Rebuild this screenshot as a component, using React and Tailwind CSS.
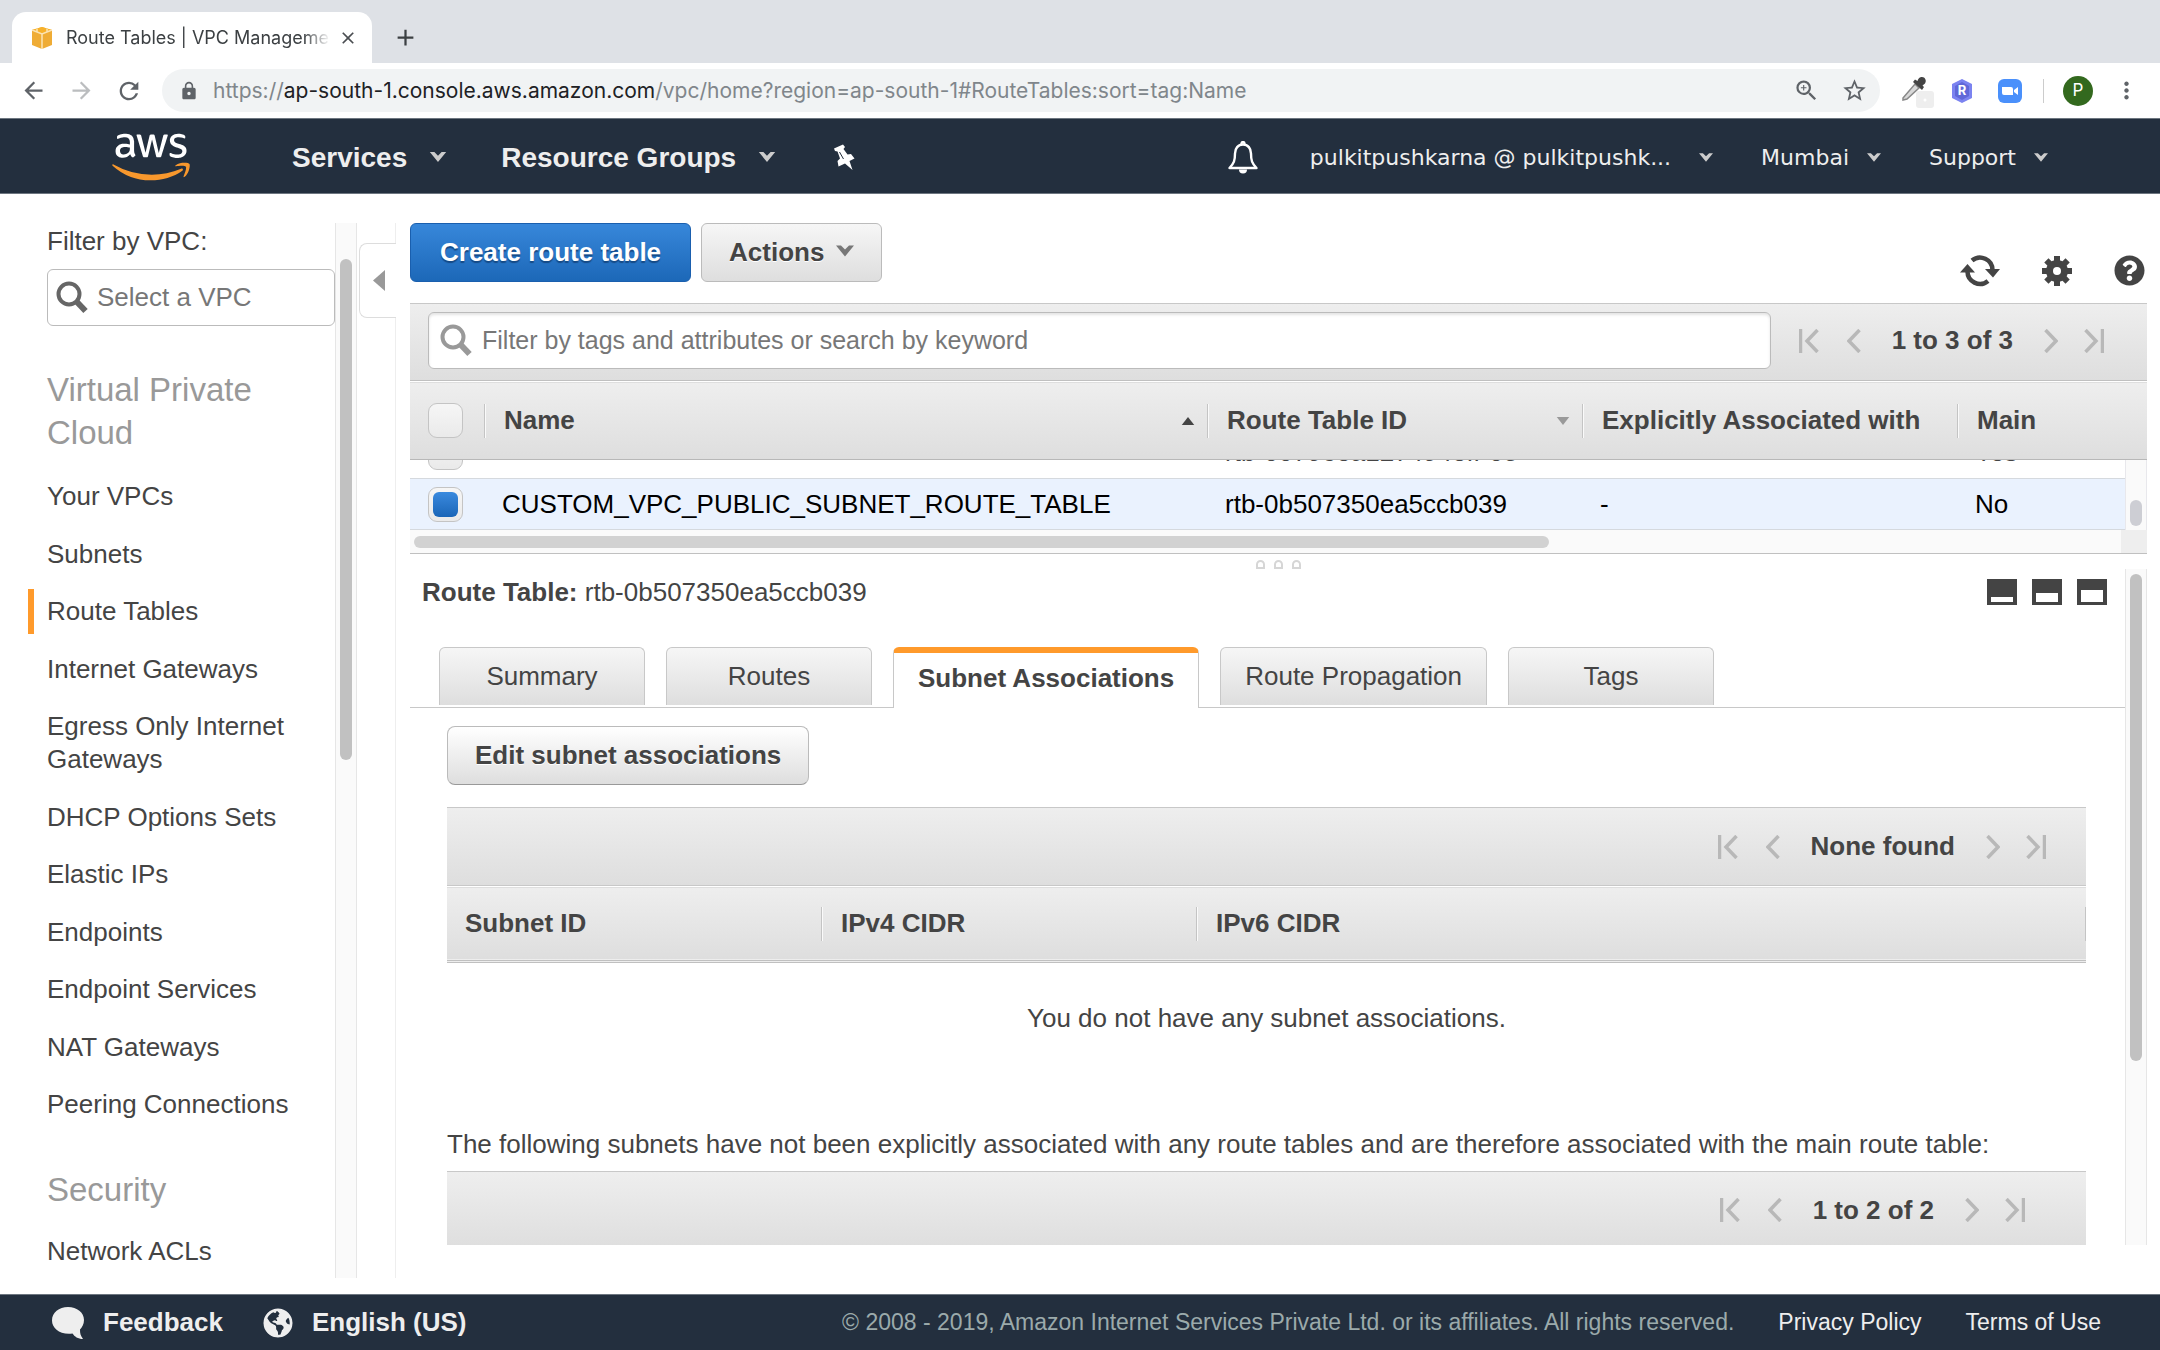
import { useState } from 'react';
import { MdAdd, MdArrowBack, MdArrowForward, MdClose, MdLock, MdMoreVert, MdRefresh, MdStarBorder, MdZoomIn } from 'react-icons/md';
import { FaAws, FaGlobeAmericas, FaQuestionCircle } from 'react-icons/fa';

const vpcLinks = [
  'Your VPCs',
  'Subnets',
  'Route Tables',
  'Internet Gateways',
  'Egress Only Internet Gateways',
  'DHCP Options Sets',
  'Elastic IPs',
  'Endpoints',
  'Endpoint Services',
  'NAT Gateways',
  'Peering Connections',
];

const tabs = ['Summary', 'Routes', 'Subnet Associations', 'Route Propagation', 'Tags'];

const routeTables = [
  { id: 'rtb-00796ea127494eff-08', name: '', associated: '', main: 'Yes' },
  { id: 'rtb-0b507350ea5ccb039', name: 'CUSTOM_VPC_PUBLIC_SUBNET_ROUTE_TABLE', associated: '-', main: 'No' },
];

function Caret({ className }) {
  return (
    <svg viewBox="0 0 18 11" className={className} fill="currentColor">
      <path d="M0 0h5l4 4 4-4h5L9 11z" />
    </svg>
  );
}

function SearchIcon({ className }) {
  return (
    <svg viewBox="0 0 32 33" className={className} fill="none" stroke="currentColor">
      <circle cx="13" cy="13" r="10.5" strokeWidth="4" />
      <path d="M21 21l8.500 9" strokeWidth="6" />
    </svg>
  );
}

function PinIcon() {
  return (
    <svg viewBox="0 0 22 26" className="h-[26px] w-[22px]" fill="#fff">
      <path d="M1 4.500L10 .5l2 2.500-1.500 2 4 5.500 3.500-.5 3.500 4.500-5 2.500L19.500 26 12 19.500 5.500 22.500 4.500 17l2.500-2.500-2.500-7-2.500-.5z" />
      <path d="M6.500 8l4 7" stroke="#232f3e" strokeWidth="1" />
    </svg>
  );
}

function BellIcon() {
  return (
    <svg viewBox="0 0 30 33" className="h-[33px] w-[30px]" fill="none" stroke="#fff" strokeWidth="2.400">
      <path d="M15 3.500c-5 0-8 4-8 9 0 7-1 10-5.500 14.500h27C24 22.500 23 19.500 23 12.500c0-5-3-9-8-9z" strokeLinejoin="round" />
      <path d="M13.500 3a1.500 2 0 013 0" />
      <path d="M11 28.500h8a4 4 0 01-8 0z" fill="#fff" stroke="none" />
    </svg>
  );
}

function RefreshIcon() {
  return (
    <svg viewBox="0 0 40 33" className="h-[33px] w-10" fill="none" stroke="#444" strokeWidth="4.500">
      <path d="M12 6.500A12.500 12.500 0 0132.500 16" />
      <path d="M28 27A12.500 12.500 0 017.500 17" />
      <path d="M25 15h15l-7 8.500z" fill="#444" stroke="none" />
      <path d="M0 18.500h15L7.500 10z" fill="#444" stroke="none" />
    </svg>
  );
}

function GearIcon() {
  return (
    <svg viewBox="0 0 30 30" className="size-[30px]">
      <g fill="#444">
        <circle cx="15" cy="15" r="11" />
        <rect x="12" y="0" width="6" height="30" />
        <rect x="12" y="0" width="6" height="30" transform="rotate(45 15 15)" />
        <rect x="12" y="0" width="6" height="30" transform="rotate(90 15 15)" />
        <rect x="12" y="0" width="6" height="30" transform="rotate(135 15 15)" />
      </g>
      <circle cx="15" cy="15" r="4" fill="#fff" />
    </svg>
  );
}

function PaneIcon({ top }) {
  return (
    <svg viewBox="0 0 30 26" className="h-[26px] w-[30px]">
      <path d="M0 0h30v26H0z" fill="#444" />
      <path d={`M4 ${top}h22v${23 - top}H4z`} fill="#fff" />
    </svg>
  );
}

function PagerIcon({ end, flip }) {
  return (
    <svg viewBox={end ? '0 0 20 24' : '0 0 14 24'} className={`h-6 ${end ? 'w-5' : 'w-3.5'} ${flip ? '-scale-x-100' : ''}`} fill="none" stroke="#b8b8b8" strokeWidth="3.500">
      {end && <path d="M1.500 0v24" />}
      <path d={end ? 'M18.500 1L8 12l10.500 11' : 'M12.500 1L2 12l10.500 11'} />
    </svg>
  );
}

function Pager({ label }) {
  return (
    <div className="flex items-center">
      <button aria-label="First page"><PagerIcon end /></button>
      <button aria-label="Previous page" className="ml-7"><PagerIcon /></button>
      <span className="mx-[31px] font-bold whitespace-nowrap">{label}</span>
      <button aria-label="Next page"><PagerIcon flip /></button>
      <button aria-label="Last page" className="ml-[26px]"><PagerIcon end flip /></button>
    </div>
  );
}

function Checkbox(props) {
  return (
    <input
      type="checkbox"
      className="block size-[35px] appearance-none rounded-[9px] border border-[#c4c4c4] bg-linear-to-b from-[#f6f6f6] to-[#eaeaea] p-[4px] before:block before:size-full before:rounded-[6px] before:content-[''] checked:before:bg-linear-to-b checked:before:from-[#3a8ade] checked:before:to-[#1a66b8]"
      {...props}
    />
  );
}

function Columns() {
  return (
    <colgroup>
      <col className="w-[74px]" />
      <col className="w-[723px]" />
      <col className="w-[375px]" />
      <col className="w-[375px]" />
      <col />
    </colgroup>
  );
}

function HeadCell({ children }) {
  return (
    <div className="flex h-[34px] items-center justify-between border-l border-[#c4c4c4] pr-3 pl-[19px] whitespace-nowrap shadow-[inset_1px_0_0_#fafafa]">
      {children}
    </div>
  );
}

function BrowserBar() {
  return (
    <div className="shrink-0 font-[Inter,sans-serif]">
      <div className="flex h-[63px] items-end bg-[#dee1e6] pl-3">
        <div className="flex h-[51px] w-[360px] items-center rounded-t-[14px] bg-white pr-3.5 pl-[19px]">
          <svg viewBox="0 0 22 22" className="size-[22px] shrink-0">
            <path d="M11 0l10 3v15l-10 4L1 18V3z" fill="#efac35" />
            <path d="M11 0l10 3-10 4L1 3z" fill="#f7b12a" />
            <path d="M1 3l10 4 10-4M11 7v15M6 1.500v3.500M16 1.500v3.500" stroke="#fbe3b3" strokeWidth="1.500" fill="none" />
          </svg>
          <span className="ml-[13px] flex-1 overflow-hidden mask-r-from-90% text-[18px] whitespace-nowrap text-[#3c4043]">Route Tables | VPC Management</span>
          <button aria-label="Close tab" className="ml-2"><MdClose className="size-5 text-[#4a4d51]" /></button>
        </div>
        <button aria-label="New tab" className="mb-3 ml-5"><MdAdd className="size-[27px] text-[#3c4043]" /></button>
      </div>
      <div className="flex h-[55px] items-center bg-white px-5">
        <button aria-label="Back"><MdArrowBack className="size-[27px] text-[#5f6368]" /></button>
        <button aria-label="Forward" className="ml-[21px]"><MdArrowForward className="size-[27px] text-[#bbbdbf]" /></button>
        <button aria-label="Reload" className="ml-5"><MdRefresh className="size-[28px] text-[#5f6368]" /></button>
        <div className="ml-[19px] flex h-[43px] flex-1 items-center rounded-full bg-[#f1f3f4] pr-3 pl-[17px] text-[#5f6368]">
          <MdLock className="size-5" />
          <div role="textbox" aria-label="Address" contentEditable suppressContentEditableWarning className="ml-[14px] flex-1 text-[21px] whitespace-nowrap text-[#80868b] outline-none">
            https://<span className="text-[#202124]">ap-south-1.console.aws.amazon.com</span>/vpc/home?region=ap-south-1#RouteTables:sort=tag:Name
          </div>
          <button aria-label="Zoom"><MdZoomIn className="size-[27px]" /></button>
          <button aria-label="Bookmark" className="ml-[21px]"><MdStarBorder className="size-[27px]" /></button>
        </div>
        <button aria-label="Color picker" className="ml-5">
          <svg viewBox="0 0 34 34" className="size-[34px]">
            <rect x="16" y="17" width="18" height="17" rx="3" fill="#eee" />
            <circle cx="25" cy="26" r="1.500" fill="#fff" />
            <path d="M3 24L15 10l4 4L7 25l-4 1z" fill="#d8d8d8" stroke="#888" strokeWidth="1.500" />
            <path d="M13 8l9 8 2-3-1.500-1.500 2.500-2c2-3 0-6.500-3-6.500s-4 2.500-4.500 4L15 5.500z" fill="#444" />
          </svg>
        </button>
        <button className="relative ml-4 flex size-6 items-center justify-center text-[13px] font-bold text-white">
          <svg viewBox="0 0 24 24" className="absolute inset-0 size-6">
            <path d="M12 0l10 5v14l-10 5L2 19V5z" fill="#7b83f0" />
            <path d="M12 3l7 4v10l-7 4-7-4V7z" fill="#6068d8" />
          </svg>
          <span className="relative">R</span>
        </button>
        <button aria-label="Zoom scheduler" className="ml-6">
          <svg viewBox="0 0 24 24" className="size-6">
            <rect width="24" height="24" rx="6" fill="#4a90fb" />
            <path d="M4 8h9a2 2 0 012 2v6H6a2 2 0 01-2-2zM16 11l4-3v8l-4-3z" fill="#fff" />
          </svg>
        </button>
        <div className="ml-[21px] h-6 w-px bg-[#ccc]" />
        <button className="ml-[19px] flex size-[30px] items-center justify-center rounded-full bg-[#33691e] text-[17px] text-white">P</button>
        <button aria-label="Menu" className="ml-5"><MdMoreVert className="size-[27px] text-[#5f6368]" /></button>
      </div>
    </div>
  );
}

function ConsoleNav() {
  return (
    <nav className="flex h-[76px] shrink-0 items-center border-y border-[#6d7680] bg-[#232f3e] px-28 pt-0.5 text-[#eee] [text-shadow:0_2px_1px_#000]">
      <a href="#" aria-label="AWS">
        <svg className="absolute size-0">
          <linearGradient id="awsFill" x2="0" y2="1">
            <stop offset="58%" stopColor="#fff" />
            <stop offset="58%" stopColor="#f8982d" />
          </linearGradient>
        </svg>
        <FaAws className="h-[62px] w-[78px]" style={{ fill: 'url(#awsFill)' }} />
      </a>
      <button className="ml-[102px] flex items-center gap-[22px] text-[28px] font-bold">
        Services <Caret className="h-[10px] w-[18px] text-[#ccc]" />
      </button>
      <button className="ml-[54px] flex items-center gap-[22px] text-[28px] font-bold">
        Resource Groups <Caret className="h-[10px] w-[18px] text-[#ccc]" />
      </button>
      <button aria-label="Pin" className="ml-[57px]"><PinIcon /></button>
      <button aria-label="Notifications" className="ml-auto"><BellIcon /></button>
      <div className="ml-[52px] flex items-center gap-12 font-['DejaVu_Sans',Verdana,sans-serif] text-[22px]">
        <button className="flex items-center gap-7">pulkitpushkarna @ pulkitpushk... <Caret className="h-[9px] w-3.5 text-[#ccc]" /></button>
        <button className="flex items-center gap-[18px]">Mumbai <Caret className="h-[9px] w-3.5 text-[#ccc]" /></button>
        <button className="flex items-center gap-[18px]">Support <Caret className="h-[9px] w-3.5 text-[#ccc]" /></button>
      </div>
    </nav>
  );
}

function Sidebar() {
  return (
    <aside className="flex w-[396px] shrink-0 pb-4">
      <div className="w-[335px] overflow-hidden pl-[47px]">
        <label htmlFor="vpc" className="block leading-9">Filter by VPC:</label>
        <div className="mt-[10px] flex h-[57px] items-center rounded-md border border-[#bbb] bg-white pl-2">
          <SearchIcon className="h-[33px] w-8 shrink-0 text-[#666]" />
          <input id="vpc" placeholder="Select a VPC" className="ml-[9px] w-full min-w-0 outline-none placeholder:text-[#777]" />
        </div>
        <h2 className="mt-[42px] text-[33px] leading-[43px] text-[#999]">Virtual Private Cloud</h2>
        <ul className="mt-[26px] flex h-[641px] flex-col justify-between">
          {vpcLinks.map(link => (
            <li key={link}>
              {link === 'Route Tables' ? (
                <a href="#" aria-current="page" className="-ml-[19px] flex items-center gap-[13px]">
                  <span className="-my-1.5 h-[45px] w-1.5 bg-[#ff9a2b]" />
                  {link}
                </a>
              ) : (
                <a href="#" className="block">{link}</a>
              )}
            </li>
          ))}
        </ul>
        <h2 className="mt-[47px] text-[33px] leading-[43px] text-[#999]">Security</h2>
        <a href="#" className="mt-6 block">Network ACLs</a>
      </div>
      <div className="w-[22px] border-x border-[#e6e6e6] bg-[#fafafa] px-1 pt-9">
        <div className="h-[501px] rounded-full bg-[#c1c1c1]" />
      </div>
      <div className="flex flex-1 flex-col pl-0.5">
        <div className="h-5 border-r border-[#eee]" />
        <button aria-label="Collapse navigation" className="flex h-[75px] items-center justify-end rounded-l-lg border-y border-l border-[#ddd] pr-[11px]">
          <svg viewBox="0 0 12 21" className="h-[21px] w-3"><path d="M12 0v21L0 10.500z" fill="#999" /></svg>
        </button>
        <div className="flex-1 border-r border-[#eee]" />
      </div>
    </aside>
  );
}

function RouteTableList() {
  return (
    <>
      <div className="flex h-[78px] shrink-0 border-t border-b border-t-[#c8c8c8] border-b-[#c0c0c0] bg-linear-to-b from-[#eee] to-[#dedede] pt-2 pr-[43px] pl-[18px]">
        <label className="mr-7 flex h-[57px] flex-1 items-center rounded-md border border-[#bbb] bg-white pl-[11px] shadow-[inset_0_2px_3px_#e4e4e4]">
          <SearchIcon className="h-[33px] w-8 text-[#999]" />
          <input aria-label="Filter" placeholder="Filter by tags and attributes or search by keyword" className="ml-[10px] flex-1 text-[25px] outline-none placeholder:text-[#777]" />
        </label>
        <div className="flex h-[57px] items-center">
          <Pager label="1 to 3 of 3" />
        </div>
      </div>
      <table className="w-full table-fixed text-left">
        <Columns />
        <thead>
          <tr className="h-[78px] border-t border-b border-t-white border-b-[#b8b8b8] bg-linear-to-b from-[#eee] to-[#dedede]">
            <th className="pl-[18px]"><Checkbox aria-label="Select all" /></th>
            <th>
              <HeadCell>
                Name
                <svg viewBox="0 0 14 9" className="h-2 w-3.5"><path d="M7 0l7 9H0z" fill="#444" /></svg>
              </HeadCell>
            </th>
            <th>
              <HeadCell>
                Route Table ID
                <svg viewBox="0 0 14 9" className="h-2 w-3.5"><path d="M7 9l7-9H0z" fill="#999" /></svg>
              </HeadCell>
            </th>
            <th><HeadCell>Explicitly Associated with</HeadCell></th>
            <th><HeadCell>Main</HeadCell></th>
          </tr>
        </thead>
      </table>
      <div className="flex h-[70px] shrink-0">
        {/* list is scrolled to its end, so the row before the last is cut off */}
        <div className="flex flex-1 flex-col justify-end overflow-hidden">
          <table className="w-full table-fixed">
            <Columns />
            <tbody>
              {routeTables.map(table => (
                <tr key={table.id} className={`h-[51px] border-b border-[#d5d9de] ${table.name ? 'bg-[#eaf2fe] text-black' : ''}`}>
                  <td className="pl-[18px]"><Checkbox aria-label={table.id} defaultChecked={!!table.name} /></td>
                  <td className="pl-[18px]">{table.name}</td>
                  <td className="pl-[18px]">{table.id}</td>
                  <td className="pl-[18px]">{table.associated}</td>
                  <td className="pl-[18px]">{table.main}</td>
                </tr>
              ))}
            </tbody>
          </table>
        </div>
        <div className="flex w-[22px] flex-col justify-end border-x border-[#e8e8ec] bg-[#fafafa] px-1 pb-1">
          <div className="h-[26px] rounded-full bg-[#cdced4]" />
        </div>
      </div>
      <div className="flex h-6 shrink-0 border-b border-[#c0c0c0] bg-[#fafafa]">
        <div className="flex flex-1 items-center px-1">
          <div className="h-3 w-2/3 rounded-full bg-[#d2d2d2]" />
        </div>
        <div className="w-[26px] bg-[#eee]" />
      </div>
      <div className="flex h-[15px] shrink-0 items-end justify-center gap-[9px]">
        <span className="size-[9px] rounded-t-full border-2 border-[#d6d6d6]" />
        <span className="size-[9px] rounded-t-full border-2 border-[#d6d6d6]" />
        <span className="size-[9px] rounded-t-full border-2 border-[#d6d6d6]" />
      </div>
    </>
  );
}

function RouteTableDetail() {
  const [activeTab, setActiveTab] = useState('Subnet Associations');

  return (
    <div className="flex min-h-0 flex-1">
      <div className="flex flex-1 flex-col overflow-hidden">
        <div className="flex h-[46px] shrink-0 items-center pr-[18px] pl-3">
          <h1><b>Route Table:</b> rtb-0b507350ea5ccb039</h1>
          <div className="ml-auto flex gap-[15px]">
            <button aria-label="Minimize pane"><PaneIcon top={18} /></button>
            <button aria-label="Split pane"><PaneIcon top={14} /></button>
            <button aria-label="Maximize pane"><PaneIcon top={11} /></button>
          </div>
        </div>
        <div role="tablist" className="mt-8 flex h-[61px] shrink-0 items-start gap-[21px] border-b border-[#c8c8c8] pl-[29px]">
          {tabs.map(tab => (
            <button
              key={tab}
              role="tab"
              aria-selected={tab === activeTab}
              onClick={() => setActiveTab(tab)}
              className={tab === activeTab
                ? 'h-[61px] min-w-[206px] rounded-t-md border-x border-t-[6px] border-x-[#c8c8c8] border-t-[#ff9a2b] bg-white px-6 pb-1 font-bold'
                : 'h-[58px] min-w-[206px] rounded-t-md border-x border-t border-[#c8c8c8] bg-linear-to-b from-[#f6f6f6] to-[#dedede] px-6'}
            >
              {tab}
            </button>
          ))}
        </div>
        <div className="flex flex-col pt-[18px] pr-[39px] pl-[37px]">
          <button className="h-[59px] shrink-0 self-start rounded-lg border border-[#bbb] border-b-[#999] bg-linear-to-b from-white to-[#dedede] px-[27px] font-bold [text-shadow:0_1px_0_#fff]">
            Edit subnet associations
          </button>
          <div className="mt-[22px] flex h-[79px] shrink-0 justify-end border-y border-[#c8c8c8] bg-linear-to-b from-[#eee] to-[#dedede] pr-10">
            <Pager label="None found" />
          </div>
          <table className="w-full table-fixed">
            <colgroup>
              <col className="w-[374px]" />
              <col className="w-[375px]" />
              <col />
            </colgroup>
            <thead>
              <tr className="h-[75px] border-t border-b-[3px] border-double border-t-white border-b-[#c0c0c0] bg-linear-to-b from-[#eee] to-[#dedede] text-left">
                <th className="pl-[18px]">Subnet ID</th>
                <th><HeadCell>IPv4 CIDR</HeadCell></th>
                <th><div className="border-r border-[#c4c4c4]"><HeadCell>IPv6 CIDR</HeadCell></div></th>
              </tr>
            </thead>
            <tbody>
              <tr>
                <td colSpan={3} className="h-28 text-center">You do not have any subnet associations.</td>
              </tr>
            </tbody>
          </table>
          <p className="mt-[54px] whitespace-nowrap">The following subnets have not been explicitly associated with any route tables and are therefore associated with the main route table:</p>
          <div className="mt-[10px] flex h-[79px] shrink-0 justify-end border-y border-[#c8c8c8] bg-linear-to-b from-[#eee] to-[#dedede] pr-[61px]">
            <Pager label="1 to 2 of 2" />
          </div>
        </div>
      </div>
      <div className="w-[22px] border-x border-[#e6e6e6] bg-[#fafafa] px-1 pt-[5px]">
        <div className="h-[487px] rounded-full bg-[#c1c1c1]" />
      </div>
    </div>
  );
}

export default function App() {
  return (
    <div className="flex h-screen flex-col overflow-hidden bg-white font-['Liberation_Sans',Arial,sans-serif] text-[26px] leading-[33px] text-[#444]">
      <BrowserBar />
      <ConsoleNav />
      <div className="flex min-h-0 flex-1 pt-[29px]">
        <Sidebar />
        <main className="ml-3.5 flex min-w-0 flex-1 flex-col pr-[13px] pb-[49px]">
          <div className="flex h-20 shrink-0 items-start gap-[10px]">
            <button className="h-[59px] rounded-md border border-[#1a5fae] bg-linear-to-b from-[#3787da] to-[#1c68b8] px-[29px] font-bold text-white [text-shadow:0_2px_1px_#154a86]">Create route table</button>
            <button className="flex h-[59px] items-center gap-3 rounded-md border border-[#bbb] bg-linear-to-b from-[#f6f6f6] to-[#dedede] px-[27px] font-bold [text-shadow:0_1px_0_#fff]">
              Actions <Caret className="mb-1 h-3 w-[18px] text-[#777]" />
            </button>
            <div className="ml-auto flex items-center gap-[42px] pt-[31px] pr-0.5">
              <button aria-label="Refresh"><RefreshIcon /></button>
              <button aria-label="Settings"><GearIcon /></button>
              <button aria-label="Help"><FaQuestionCircle className="size-[31px]" /></button>
            </div>
          </div>
          <RouteTableList />
          <RouteTableDetail />
        </main>
      </div>
      <footer className="flex h-14 shrink-0 items-center border-t border-[#6d7680] bg-[#232f3e] pr-[59px] pl-[52px] text-[#eee]">
        <a href="#" className="flex items-center gap-[19px] font-bold">
          <svg viewBox="0 0 32 32" className="size-8" fill="#eee">
            <path d="M16 0c9 0 16 5.500 16 13 0 4-2 7.500-4 9.500 0 4 .5 6 3 9.500-5 0-8.500-2.500-10.500-5.500C8 28 0 21.500 0 13.500 0 5.500 7 0 16 0z" />
          </svg>
          Feedback
        </a>
        <a href="#" className="ml-10 flex items-center gap-[19px] font-bold">
          <FaGlobeAmericas className="size-[30px] rounded-full" />
          English (US)
        </a>
        <div className="ml-auto flex gap-11 text-[23px]">
          <span className="text-[#9baaab]">© 2008 - 2019, Amazon Internet Services Private Ltd. or its affiliates. All rights reserved.</span>
          <a href="#">Privacy Policy</a>
          <a href="#">Terms of Use</a>
        </div>
      </footer>
    </div>
  );
}
